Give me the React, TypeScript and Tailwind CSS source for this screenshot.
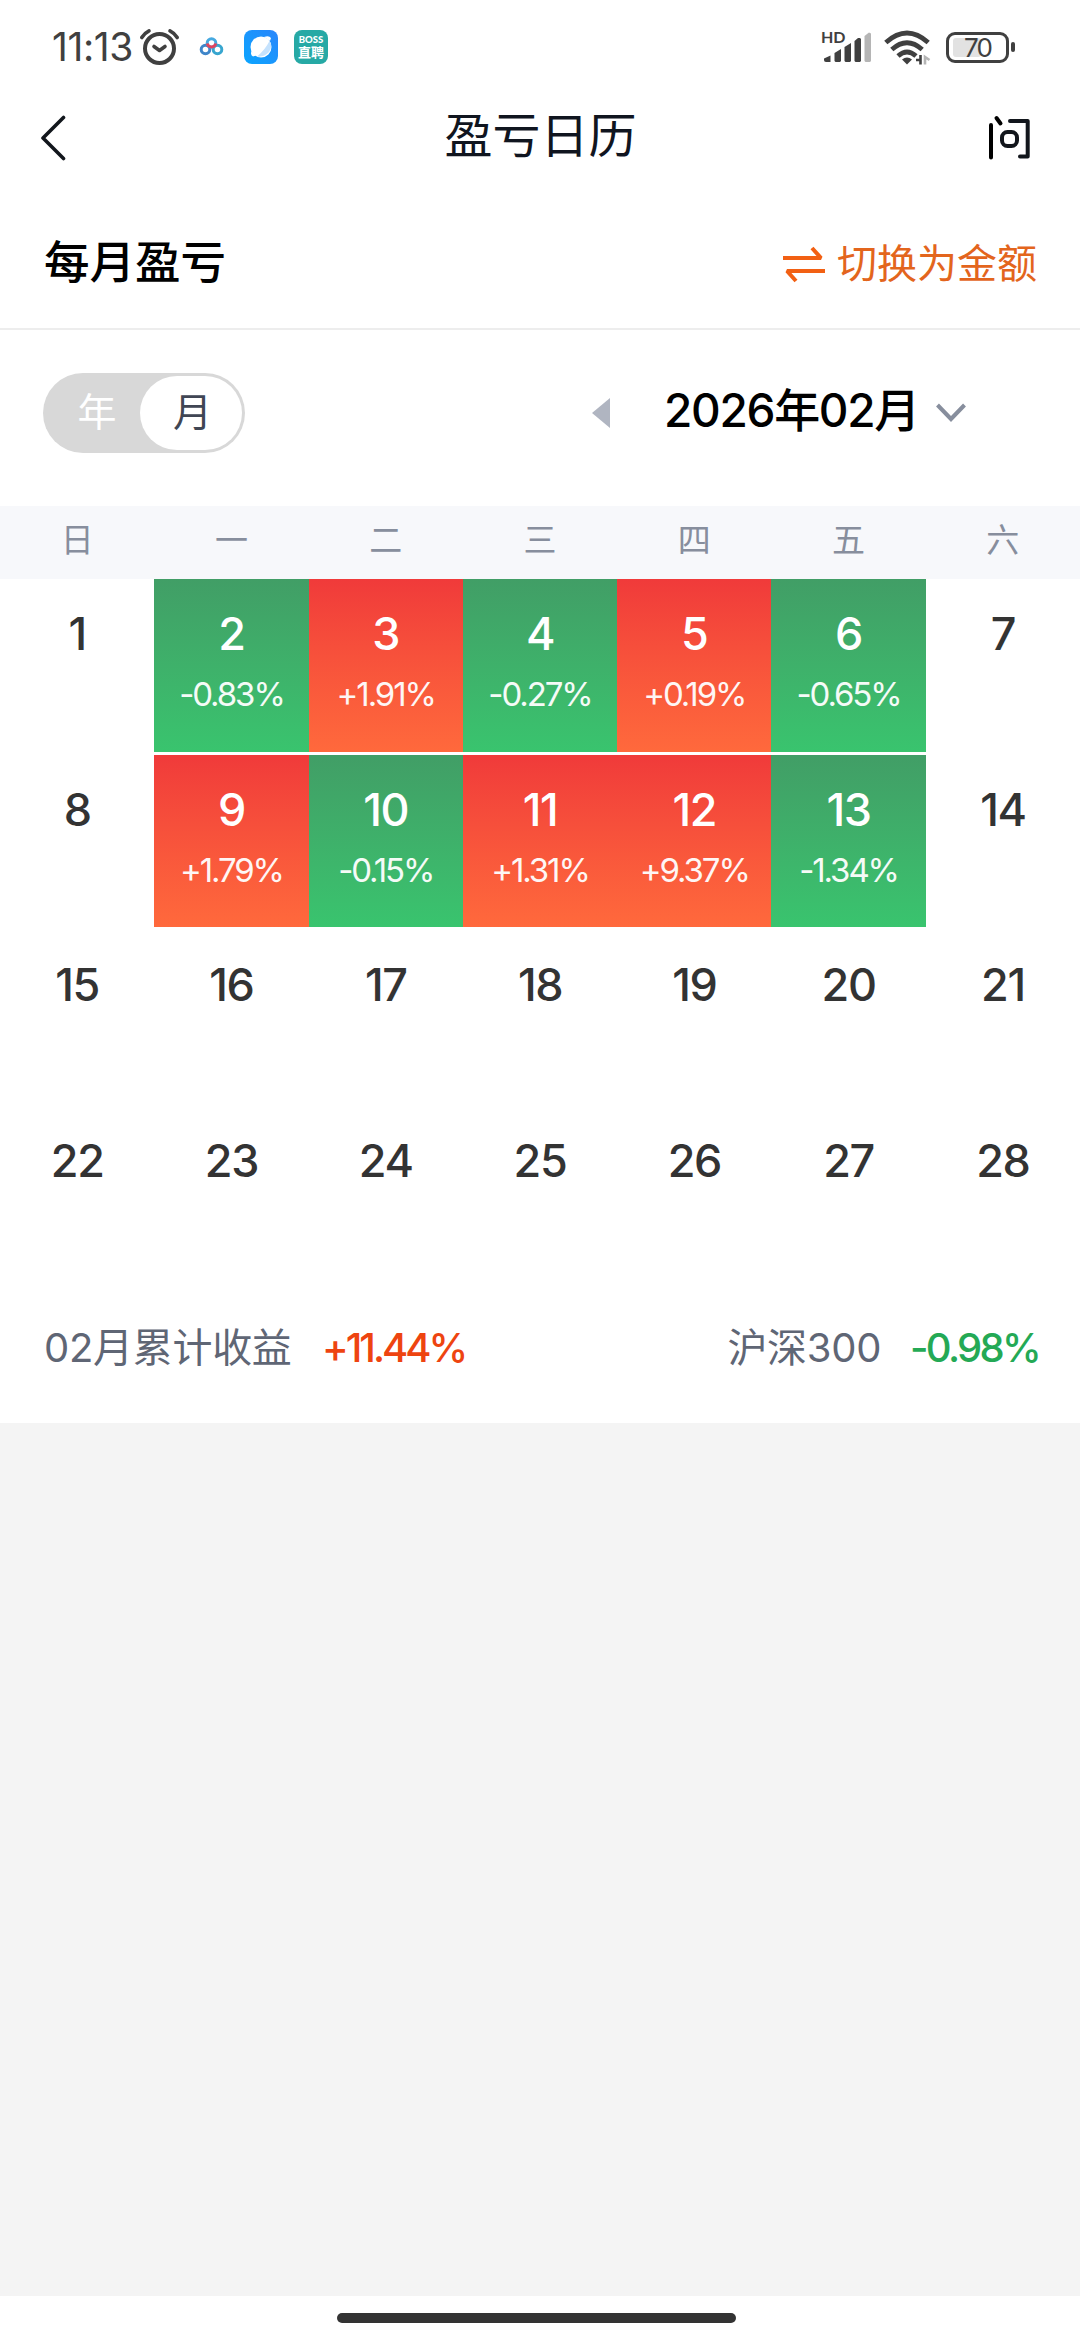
import React from "react";

type Day = { day: number; change?: string };

const changes: Record<number, string> = {
  2: "-0.83%",
  3: "+1.91%",
  4: "-0.27%",
  5: "+0.19%",
  6: "-0.65%",
  9: "+1.79%",
  10: "-0.15%",
  11: "+1.31%",
  12: "+9.37%",
  13: "-1.34%",
};

const days: Day[] = Array.from({ length: 28 }, (_, i) => ({ day: i + 1, change: changes[i + 1] }));
const weekdays = ["日", "一", "二", "三", "四", "五", "六"];

function StatusBar() {
  return (
    <div className="flex h-[94px] items-center text-[#404040]">
      <span className="ml-[52px] w-[84px] text-[39px] leading-[94px] tracking-[-0.4px] whitespace-nowrap">11:13</span>
      <svg className="ml-[3px] h-[38px] w-[42px]" viewBox="0 0 42 38" fill="none" stroke="#404040" strokeLinecap="round">
        <circle cx="20.5" cy="20.5" r="14.5" strokeWidth="4" />
        <path d="M2.8 9.5Q5.500 5 10 2.800M31 2.800Q35.500 5 38.200 9.500" strokeWidth="3.600" />
        <path d="M15 18.500L20.500 22.500L26 18.500" strokeWidth="3.600" strokeLinejoin="round" />
      </svg>
      <svg className="ml-[18px] h-[20px] w-[26px]" viewBox="0 0 26 20" fill="none" strokeWidth="3">
        <circle cx="6.500" cy="12.500" r="4.300" stroke="#3f86c9" />
        <circle cx="18.500" cy="12.500" r="4.300" stroke="#38a6cf" />
        <circle cx="12.500" cy="6" r="4.300" stroke="#46a9e0" />
        <path d="M8.300 6.500A4.300 4.300 0 0 0 16.700 6.500" stroke="#e0455f" />
      </svg>
      <svg className="ml-[19px] h-[34px] w-[34px]" viewBox="0 0 34 34">
        <defs>
          <linearGradient id="app" x1="0" y1="1" x2="1" y2="0">
            <stop offset="0" stopColor="#0aa5ff" />
            <stop offset="1" stopColor="#2a86fb" />
          </linearGradient>
        </defs>
        <rect width="34" height="34" rx="8" fill="url(#app)" />
        <circle cx="17" cy="17" r="10.500" fill="#fff" />
        <path d="M25.500 11Q29 16 25 22Q20 27.500 13 26.500Q21 20 25.500 11Z" fill="#c5e2fd" />
        <path d="M20 7Q25 5 27 8L26 11ZM7.500 21Q6 25 9 26.500L12 25.500Z" fill="#fff" />
      </svg>
      <div className="ml-[16px] flex h-[34px] w-[34px] flex-col items-center justify-center rounded-[8px] bg-[#26a9a5] text-white">
        <span className="font-[Lato] text-[9.5px] leading-[10px] font-black">BOSS</span>
        <span className="text-[13px] leading-[15px] font-bold">直聘</span>
      </div>
      <svg className="ml-[493px] h-[40px] w-[52px]" viewBox="0 -4 52 40">
        <text x="0" y="11.500" fontSize="16" fontWeight="700" fill="#404040" fontFamily="Lato, sans-serif">HD</text>
        <g fill="#404040">
          <path d="M3 27.500L9.500 24.500V31H5Q3 31 3 29Z" />
          <path d="M13.500 22L20 18V30L19 31H14.500L13.500 30Z" />
          <path d="M23.500 16L30 12V30L29 31H24.500L23.500 30Z" />
          <path d="M33.500 10L37 7H39L40 8V30L39 31H34.500L33.500 30Z" />
        </g>
        <path d="M43.500 5L48 1.500L50 2.500V30L49 31H44.500L43.500 30Z" fill="#b5b5b5" />
      </svg>
      <svg className="ml-[11px] h-[36px] w-[48px]" viewBox="0 0 48 36" fill="none" stroke="#404040" strokeWidth="4.800">
        <path d="M1.800 13.500Q23 -5.500 44.200 13.500" />
        <path d="M7.800 20.500Q23 7 38.200 20.500" />
        <path d="M14 27Q23 19 32 27" />
        <path d="M18 30.500Q23 26.500 28 30.500L23 35.500Z" fill="#404040" stroke="none" />
        <path d="M32 31H36.500V35.500V26" strokeWidth="2.600" />
        <path d="M41 35.500V28L45.500 31" stroke="#b5b5b5" strokeWidth="2.600" />
      </svg>
      <div className="ml-[14px] flex h-[31px] w-[63px] items-center rounded-[9px] border-[3px] border-[#404040] pl-[4px]">
        <div className="flex h-[19px] w-[28px] items-center rounded-[3px] bg-[#e2e2e2]">
          <span className="ml-[11px] text-[26px] leading-[19px] tracking-[-1.8px]">70</span>
        </div>
      </div>
      <div className="ml-[2px] h-[10px] w-[4px] rounded-[2px] bg-[#404040]" />
    </div>
  );
}

function Header() {
  return (
    <header className="flex h-[88px] items-center justify-between pr-[50px] pl-[40px] text-[#10151f]">
      <svg className="h-[46px] w-[41px]" viewBox="0 0 41 46" fill="none" stroke="#12161c" strokeWidth="3.600" strokeLinecap="round" strokeLinejoin="round">
        <path d="M23.500 2.500L3 23L23.500 43.500" />
      </svg>
      <h1 className="-mt-[4px] ml-[11px] text-[48px] leading-[60px]">盈亏日历</h1>
      <svg className="-mt-[2px] h-[46px] w-[41px]" viewBox="0 0 41 46" fill="none" stroke="#12161c" strokeWidth="4" strokeLinecap="round" strokeLinejoin="round">
        <path d="M2 11V43.500M7.500 4L11.500 9.500" stroke="#000" />
        <path d="M21 7H38.700V42.500H31" />
        <rect x="13" y="18" width="15" height="14" rx="5.500" />
      </svg>
    </header>
  );
}

function SummaryTitle() {
  return (
    <div className="flex h-[148px] items-center justify-between border-b-2 border-[#ededed] pt-[17px] pr-[43px] pl-[44px]">
      <h2 className="text-[45.5px] font-medium text-black">每月盈亏</h2>
      <div className="flex items-center text-[#e3651d]">
        <svg className="mr-[12px] h-[38px] w-[42px]" viewBox="0 0 42 38" fill="none" stroke="#f26013" strokeWidth="4" strokeLinejoin="bevel">
          <path d="M0 13H38L29 3" />
          <path d="M42 26H4L13 36" />
        </svg>
        <span className="text-[40px]">切换为金额</span>
      </div>
    </div>
  );
}

function PeriodPicker() {
  return (
    <div className="flex h-[176px] items-center pl-[43px]">
      <div className="-mt-[11px] flex h-[80px] w-[202px] items-center rounded-full bg-[#d8d8d8] p-[3px] text-[39px]">
        <span className="flex w-[94px] justify-center pl-[8px] text-white">年</span>
        <span className="flex h-[74px] w-[102px] items-center justify-center rounded-full bg-white pl-[3px] text-[#404654]">月</span>
      </div>
      <svg className="-mt-[11px] ml-[347px] h-[30px] w-[18px]" viewBox="0 0 18 30">
        <path d="M18 0V30L0 15Z" fill="#b0b5c1" />
      </svg>
      <span className="-mt-[16px] ml-[54px] w-[254px] text-[46px] font-medium tracking-[-1.3px] whitespace-nowrap text-black">2026年02月</span>
      <svg className="-mt-[11px] ml-[18px] h-[20px] w-[30px]" viewBox="0 0 30 20" fill="none" stroke="#878e9d" strokeWidth="4">
        <path d="M1.500 2L15 16L28.500 2" />
      </svg>
    </div>
  );
}

function DayCell({ day, change }: Day) {
  const tone = !change
    ? "text-[#333333]"
    : change.startsWith("-")
      ? "bg-linear-to-b from-[#419e66] to-[#39c46e] text-white"
      : "bg-linear-to-b from-[#f03a3a] to-[#ff693c] text-white";
  return (
    <div className={`flex h-[172.5px] flex-col items-center ${tone}`}>
      <span className="mt-[27px] text-[45px] leading-[56px] font-medium tracking-[-1.4px]">{day}</span>
      {change && <span className="mt-[12px] text-[33px] leading-[40px] tracking-[-2.1px] opacity-95">{change}</span>}
    </div>
  );
}

function Calendar() {
  return (
    <>
      <div className="grid h-[73px] grid-cols-7 items-center bg-[#f7f8fb] pb-[3px] text-center text-[33px] text-[#878e9d]">
        {weekdays.map((name) => (
          <span key={name}>{name}</span>
        ))}
      </div>
      <div className="grid grid-cols-7 gap-y-[3px]">
        {days.map((d) => (
          <DayCell key={d.day} {...d} />
        ))}
      </div>
    </>
  );
}

function Totals() {
  return (
    <div className="flex h-[139px] items-center justify-between pr-[43px] pl-[44px] text-[40px] text-[#5f6675]">
      <div className="flex items-center">
        <span className="w-[278px] tracking-[-0.3px]">02月累计收益</span>
        <span className="font-medium tracking-[-3px] text-[#ee4410]">+11.44%</span>
      </div>
      <div className="flex items-center">
        <span className="mr-[29px] tracking-[-0.3px]">沪深300</span>
        <span className="-mr-[2px] font-medium tracking-[-2.7px] text-[#24a955]">-0.98%</span>
      </div>
    </div>
  );
}

export default function App() {
  return (
    <div className="flex h-[2340px] w-[1080px] flex-col overflow-hidden bg-[#f4f4f4] font-[Inter,'Noto_Sans_CJK_SC',sans-serif]">
      <main className="h-[1423px] bg-white">
        <StatusBar />
        <Header />
        <SummaryTitle />
        <PeriodPicker />
        <Calendar />
        <Totals />
      </main>
      <div className="mt-auto flex h-[44px] justify-center bg-white pt-[17px] pr-[7px]">
        <div className="h-[10px] w-[399px] rounded-full bg-[#333333]" />
      </div>
    </div>
  );
}
